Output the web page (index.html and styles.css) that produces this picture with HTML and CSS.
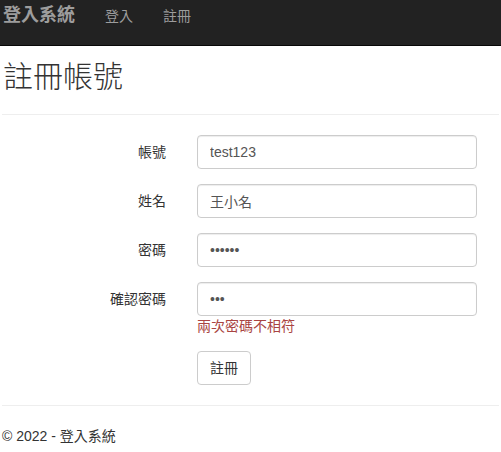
FILE: index.html
```html
<!DOCTYPE html>
<html lang="zh-Hant">
<head>
<meta charset="utf-8">
<title>註冊帳號 - 登入系統</title>
<link rel="stylesheet" href="styles.css">
</head>
<body>
<nav class="navbar">
  <a class="brand" href="#">登入系統</a>
  <ul class="nav-links">
    <li><a class="nav-link" href="#">登入</a></li>
    <li><a class="nav-link" href="#">註冊</a></li>
  </ul>
</nav>
<div class="container">
  <h2 class="title">註冊帳號</h2>
  <hr class="rule">
  <form class="form">
    <div class="form-row">
      <label class="form-label" for="acc">帳號</label>
      <div class="form-field"><input class="form-input" id="acc" type="text" value="test123"></div>
    </div>
    <div class="form-row">
      <label class="form-label" for="name">姓名</label>
      <div class="form-field"><input class="form-input" id="name" type="text" value="王小名"></div>
    </div>
    <div class="form-row">
      <label class="form-label" for="pw">密碼</label>
      <div class="form-field"><input class="form-input" id="pw" type="password" value="123456"></div>
    </div>
    <div class="form-row">
      <label class="form-label" for="pw2">確認密碼</label>
      <div class="form-field">
        <input class="form-input" id="pw2" type="password" value="123">
        <span class="help-error">兩次密碼不相符</span>
      </div>
    </div>
    <div class="form-row form-row-last">
      <div class="form-label"></div>
      <div class="form-field"><button class="btn" type="button">註冊</button></div>
    </div>
  </form>
  <hr class="rule footer-rule">
  <footer class="footer">
    <p class="footer-text">© 2022 - 登入系統</p>
  </footer>
</div>
</body>
</html>
```

FILE: styles.css
```css
* { box-sizing: border-box; }

body {
  margin: 0;
  font-family: "Liberation Sans", Arial, "Noto Sans CJK TC", sans-serif;
  font-size: 14px;
  line-height: 20px;
  color: #333;
  background: #fff;
}

.navbar {
  display: flex;
  align-items: flex-start;
  height: 46px;
  background: #222;
  border-bottom: 1px solid #080808;
}

.brand {
  padding: 5px 15px 0 3px;
  font-size: 18px;
  line-height: 20px;
  font-weight: bold;
  color: #9d9d9d;
  text-decoration: none;
}

.nav-links {
  display: flex;
  margin: 0;
  padding: 0;
  list-style: none;
}

.nav-link {
  display: block;
  padding: 6px 15px 0;
  line-height: 20px;
  color: #9d9d9d;
  text-decoration: none;
}

.container {
  padding: 0 2px;
}

.title {
  margin: 14px 0 21px 1px;
  font-size: 30px;
  line-height: 33px;
  font-weight: 300;
  color: #333;
}

.rule {
  margin: 0;
  border: 0;
  border-top: 1px solid #eee;
}

.form {
  margin-top: 20px;
}

.form-row {
  display: flex;
  align-items: flex-start;
  gap: 31px;
  margin-bottom: 15px;
}

.form-row-last {
  margin-bottom: 0;
}

.form-label {
  width: 164px;
  flex: none;
  text-align: right;
  line-height: 34px;
  color: #333;
}

.form-field {
  display: flex;
  flex-direction: column;
  align-items: flex-start;
}

.form-input {
  width: 280px;
  height: 34px;
  padding: 6px 12px;
  font-family: inherit;
  font-size: 14px;
  line-height: 20px;
  color: #555;
  background: #fff;
  border: 1px solid #ccc;
  border-radius: 4px;
  box-shadow: inset 0 1px 1px rgba(0,0,0,.075);
}

.help-error {
  display: block;
  line-height: 20px;
  color: #a94442;
}

.btn {
  height: 34px;
  padding: 6px 12px;
  font-family: inherit;
  font-size: 14px;
  line-height: 20px;
  color: #333;
  background: #fff;
  border: 1px solid #ccc;
  border-radius: 4px;
}

.footer-rule {
  margin-top: 20px;
}

.footer-text {
  margin: 20px 0 0;
}
```
